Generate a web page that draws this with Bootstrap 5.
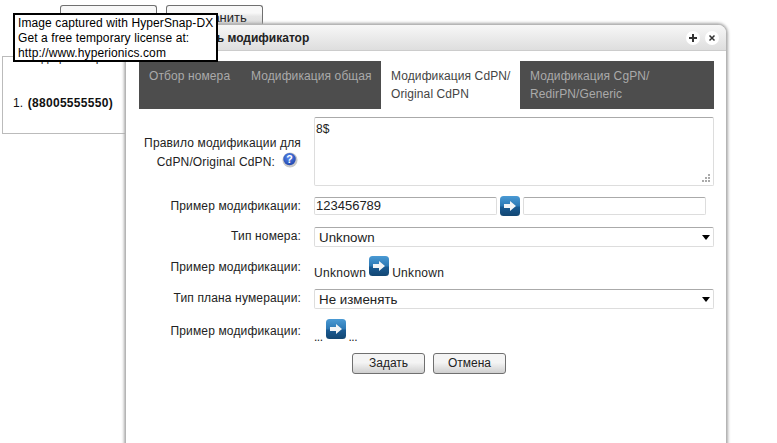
<!DOCTYPE html>
<html lang="ru">
<head>
<meta charset="utf-8">
<title>Модификатор</title>
<link rel="stylesheet" href="https://cdn.jsdelivr.net/npm/bootstrap@5.3.0/dist/css/bootstrap.min.css">
<style>
html,body{height:443px;overflow:hidden;background:#fff}
body{font-family:"Liberation Sans",Arial,sans-serif;font-size:12px;color:#222;position:relative}
.top-bar{padding:5px 0 0 60px;gap:9px}
.page-btn{width:97px;height:24px;padding:0;font-size:13px;color:#222;border:1px solid #707070;border-bottom:0;border-radius:3px 3px 0 0;background:linear-gradient(#f8f8f8 30%,#e6e6e6 45%,#d8d8d8)}
.num-box{width:124px;height:78px;margin:27px 0 0 2px;border:1px solid #bbb;border-right:0;padding:0 10px;font-size:12px}
.num-head{line-height:14px;margin-top:-7px;background:#fff;width:70px;margin-left:12px}
.num-line{margin-top:30px;color:#111}
.num-line b{letter-spacing:.3px;margin-left:-2px}
.dlg{position:absolute;left:125px;top:24px;width:602px;height:460px;background:#fff;border:1px solid #b5b5b5;border-radius:6px 9px 0 0;box-shadow:0 0 3px 1px #aaa}
.dlg-head{height:26px;background:linear-gradient(#f7f7f7,#dedede);border-radius:5px 8px 0 0;border-bottom:1px solid #ccc;padding:0 7px 0 0}
.dlg-title{font-weight:700;color:#222;margin-left:40px;width:139px;white-space:nowrap}
.win-btn{width:14px;height:14px;border-radius:50%;background:#fff;margin-left:5px}
.tabs-wrap{margin:10px 12px 0 13px;background:#4d4d4d;width:575px;height:48px;flex-wrap:nowrap}
.tab-lnk{color:#aaa;font-size:12px;letter-spacing:.1px;line-height:18px;padding:6px 10px 0;height:48px;white-space:nowrap}
.tab-lnk:hover{color:#aaa}
.tab-on,.tab-on:hover{background:#fff;color:#444}
.t1{width:102px}.t2{width:140px}.t3{width:139px}.t4{width:194px}
.form-wrap{padding:8px 0 0 0}
.f-row{padding-left:5px}
.f-lab{width:170px;text-align:right;color:#222;line-height:18px;flex:none;letter-spacing:.15px}
.f-ctl{margin-left:13px;flex:none}
.lab-rule{padding-top:17px}
.lab-up{padding-bottom:2px}
.lab-a{padding-top:2px}
.lab-b{height:20px;padding-top:3px}
.help-ic{margin:0 3px 0 7px;vertical-align:-2px}
.ta-box{width:400px;height:69px;border:1px solid #ddd;border-top-color:#aaa;border-radius:2px;padding:4px 1px;font-size:12px;line-height:14px;color:#222;resize:none;box-shadow:none;min-height:0;background:no-repeat right 3px bottom 3px/8px 8px url("data:image/svg+xml,%3Csvg xmlns='http://www.w3.org/2000/svg' viewBox='0 0 8 8'%3E%3Cpath d='M6 0h2v2H6zM3 3h2v2H3zM6 3h2v2H6zM0 6h2v2H0zM3 6h2v2H3zM6 6h2v2H6z' fill='%23aaa'/%3E%3C/svg%3E")}
.in-box{width:183px;height:18px;border:1px solid #ddd;border-top-color:#aaa;border-radius:2px;padding:0 1px 1px;font-size:13px;line-height:15px;color:#222;min-height:0}
.sel-box{width:400px;height:20px;border:1px solid #ddd;border-top-color:#aaa;border-radius:2px;padding:0 16px 0 4px;font-size:13.33px;line-height:17px;color:#222;min-height:0;background-position:right 2px center;background-size:10px 5px;background-image:url("data:image/svg+xml,%3Csvg xmlns='http://www.w3.org/2000/svg' viewBox='0 0 10 5'%3E%3Cpath d='M1 0h8L5 5z' fill='%23000'/%3E%3C/svg%3E")}
.r-sp1{margin-top:10px}.r-sp2{margin-top:11px}.r-sp3{margin-top:9px}.r-sp4{margin-top:13px}.r-sp5{margin-top:10px}
.arr{width:20px;height:20px;display:block;flex:none}
.ex-txt{color:#222;font-size:12px;line-height:14px;gap:3px}
.ex-txt span{margin-bottom:-4px;letter-spacing:.3px}
.ex-txt span.dots{letter-spacing:-.5px;margin-bottom:-5px}
.gap-in{gap:3px}
.act-btn{width:73px;height:21px;padding:0;font-size:12px;line-height:19px;color:#222;border:1px solid #707070;border-radius:3px;background:linear-gradient(#f4f4f4 45%,#cfcfcf)}
.act-row{margin:14px 0 0 226px;gap:8px}
.snap-tip{position:absolute;left:13px;top:13px;width:205px;height:49px;background:#fff;border:2px solid #000;padding:1px 3px;font-size:12px;letter-spacing:.1px;line-height:15px;color:#000;white-space:nowrap}
</style>
</head>
<body>
<svg width="0" height="0" class="position-absolute">
<defs>
<linearGradient id="g1" x1="0" y1="0" x2="0" y2="1"><stop offset="0" stop-color="#4a9ad4"/><stop offset=".5" stop-color="#2c78b4"/><stop offset=".55" stop-color="#1a5a92"/><stop offset="1" stop-color="#124672"/></linearGradient>
<symbol id="arw" viewBox="0 0 20 20"><rect width="20" height="20" rx="3.500" fill="url(#g1)"/><path d="M4 8h6V5l6 5-6 5v-3H4z" fill="#f2f4f6"/></symbol>
<radialGradient id="g2" cx=".45" cy=".35" r=".7"><stop offset="0" stop-color="#5a8cf0"/><stop offset="1" stop-color="#1c3fa8"/></radialGradient>
</defs>
</svg>

<div class="d-flex top-bar">
  <button type="button" class="btn page-btn">Просмотр</button>
  <button type="button" class="btn page-btn">Сохранить</button>
</div>
<div class="num-box">
  <div class="num-head">Модификаторы</div>
  <div class="num-line">1.&nbsp; <b>(88005555550)</b></div>
</div>

<div class="dlg">
  <div class="dlg-head d-flex align-items-center">
    <div class="dlg-title">Добавить модификатор</div>
    <div class="ms-auto d-flex">
      <span class="win-btn d-flex align-items-center justify-content-center"><svg width="10" height="10" viewBox="0 0 10 10"><path d="M5 1v8M1 5h8" stroke="#333" stroke-width="2"/></svg></span>
      <span class="win-btn d-flex align-items-center justify-content-center"><svg width="8" height="8" viewBox="0 0 8 8"><path d="M1.500 1.500l5 5M6.500 1.500l-5 5" stroke="#333" stroke-width="1.500"/></svg></span>
    </div>
  </div>
  <ul class="nav tabs-wrap">
    <li class="nav-item"><a class="nav-link tab-lnk t1" href="#">Отбор номера</a></li>
    <li class="nav-item"><a class="nav-link tab-lnk t2" href="#">Модификация общая</a></li>
    <li class="nav-item"><a class="nav-link tab-lnk tab-on t3" href="#">Модификация CdPN/<br>Original CdPN</a></li>
    <li class="nav-item"><a class="nav-link tab-lnk t4" href="#">Модификация CgPN/<br>RedirPN/Generic</a></li>
  </ul>
  <div class="form-wrap">
    <div class="d-flex f-row">
      <div class="f-lab lab-rule">Правило модификации для CdPN/Original CdPN:<svg width="16" height="16" viewBox="0 0 18 18" class="help-ic"><circle cx="9" cy="9" r="8.500" fill="#c8c8c8"/><circle cx="8.500" cy="8" r="7" fill="url(#g2)"/><text x="8.500" y="12" text-anchor="middle" font-size="12" font-weight="700" fill="#fff" font-family="Liberation Sans">?</text></svg></div>
      <div class="f-ctl"><textarea class="form-control ta-box d-block">8$</textarea></div>
    </div>
    <div class="d-flex f-row align-items-center r-sp1">
      <div class="f-lab">Пример модификации:</div>
      <div class="f-ctl d-flex align-items-center gap-in">
        <input class="form-control in-box" value="123456789">
        <svg class="arr"><use href="#arw"/></svg>
        <input class="form-control in-box">
      </div>
    </div>
    <div class="d-flex f-row align-items-center r-sp2">
      <div class="f-lab lab-up">Тип номера:</div>
      <div class="f-ctl"><select class="form-select sel-box"><option>Unknown</option></select></div>
    </div>
    <div class="d-flex f-row r-sp3">
      <div class="f-lab lab-a">Пример модификации:</div>
      <div class="f-ctl d-flex align-items-end ex-txt"><span>Unknown</span><svg class="arr"><use href="#arw"/></svg><span>Unknown</span></div>
    </div>
    <div class="d-flex f-row align-items-center r-sp4">
      <div class="f-lab lab-up">Тип плана нумерации:</div>
      <div class="f-ctl"><select class="form-select sel-box"><option>Не изменять</option></select></div>
    </div>
    <div class="d-flex f-row r-sp5">
      <div class="f-lab lab-b">Пример модификации:</div>
      <div class="f-ctl d-flex align-items-end ex-txt"><span class="dots">...</span><svg class="arr"><use href="#arw"/></svg><span class="dots">...</span></div>
    </div>
    <div class="d-flex act-row">
      <button type="button" class="btn act-btn">Задать</button>
      <button type="button" class="btn act-btn">Отмена</button>
    </div>
  </div>
</div>

<div class="snap-tip">Image captured with HyperSnap-DX<br>Get a free temporary license at:<br>http://www.hyperionics.com</div>
<script src="https://cdn.jsdelivr.net/npm/bootstrap@5.3.0/dist/js/bootstrap.bundle.min.js"></script>
</body>
</html>
